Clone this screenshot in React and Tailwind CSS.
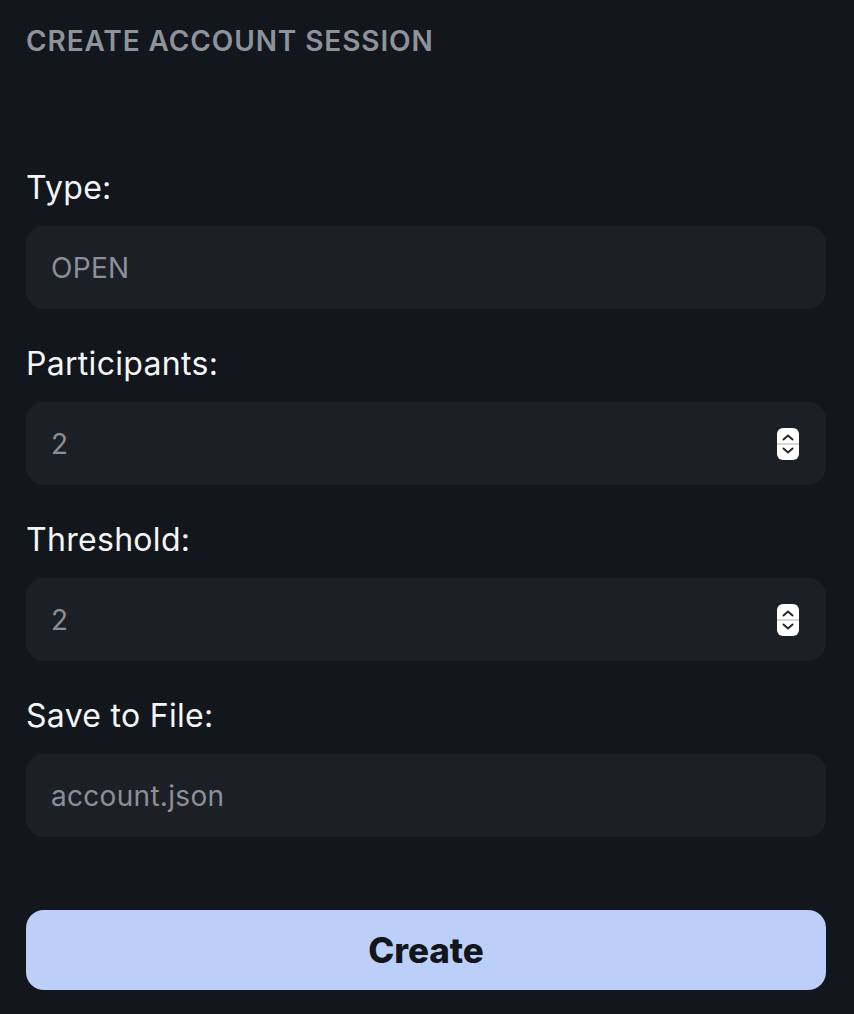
import React from "react";

function Stepper() {
  return (
    <svg width="22" height="32" viewBox="0 0 22 32" className="absolute right-[27px] top-1/2 -translate-y-1/2">
      <rect x="0" y="0" width="22" height="32" rx="6" fill="#ffffff" />
      <line x1="0" y1="16" x2="22" y2="16" stroke="#c9c9c9" strokeWidth="1.5" />
      <path d="M6.5 11.5 L11 7.5 L15.5 11.5" fill="none" stroke="#2a2a2a" strokeWidth="2" strokeLinecap="round" strokeLinejoin="round" />
      <path d="M6.5 20.5 L11 24.5 L15.5 20.5" fill="none" stroke="#2a2a2a" strokeWidth="2" strokeLinecap="round" strokeLinejoin="round" />
    </svg>
  );
}

function Field({ label, value, stepper }) {
  return (
    <div className="flex flex-col">
      <div className="h-[40px] flex items-center text-[32px] leading-[40px] tracking-[0.3px] text-[#f5f5f6]">{label}</div>
      <div className="relative mt-[18px] h-[83px] rounded-[18px] bg-[#1b1f26] flex items-center pl-[25px] text-[28px] tracking-[0.3px] text-[#8b8f98]">
        {value}
        {stepper && <Stepper />}
      </div>
    </div>
  );
}

export default function App() {
  return (
    <div
      className="w-[854px] h-[1014px] bg-[#12161d] px-[26px] pt-[23px] flex flex-col"
      style={{ fontFamily: "Inter, 'Noto Sans', sans-serif" }}
    >
      <div className="h-[36px] flex items-center text-[28px] font-semibold text-[#8e929b] tracking-[0.9px]">
        CREATE ACCOUNT SESSION
      </div>
      <div className="mt-[109px] flex flex-col gap-[35px] w-[800px]">
        <Field label="Type:" value="OPEN" />
        <Field label="Participants:" value="2" stepper />
        <Field label="Threshold:" value="2" stepper />
        <Field label="Save to File:" value="account.json" />
      </div>
      <button className="mt-[73px] w-[800px] h-[80px] rounded-[18px] bg-[#bccff9] text-[35px] font-extrabold text-[#12151b] flex items-center justify-center">
        Create
      </button>
    </div>
  );
}
